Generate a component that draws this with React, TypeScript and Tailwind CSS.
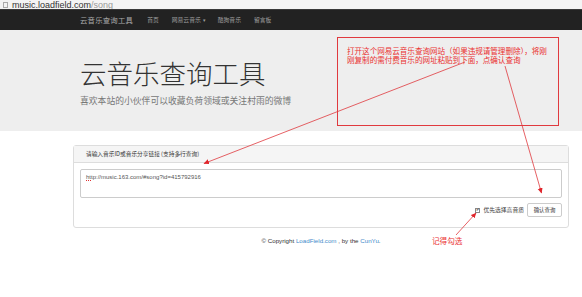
import React from "react"

const cjk = { fontFamily: '"Noto Sans CJK SC", sans-serif' }
const arial = { fontFamily: '"Liberation Sans", "Noto Sans CJK SC", sans-serif' }

export default function App() {
  return (
    <div className="relative w-[582px] h-[297px] overflow-hidden bg-white" style={arial}>
      {/* address bar */}
      <div className="h-[9px] overflow-hidden flex items-end bg-[#f4f4f4] pl-[3px]">
        <div className="w-[5px] h-[6px] border border-[#aaa] mr-[4px] mb-[1px]" />
        <span className="text-[9px] leading-[9px] text-[#333] -mb-[1px]">
          music.loadfield.com<span className="text-[#999]">/song</span>
        </span>
      </div>

      {/* navbar */}
      <div className="h-[21px] bg-[#222] border-t border-[#3a3a3a]">
        <div className="ml-[80px] flex items-center h-full text-[#9d9d9d]" style={cjk}>
          <span className="text-[7.4px] tracking-[0.2px] text-[#aaa]">云音乐查询工具</span>
          <span className="ml-[14px] text-[5.8px]">首页</span>
          <span className="ml-[13px] text-[5.8px]">网易云音乐</span>
          <span className="ml-[2px] text-[5px]">▾</span>
          <span className="ml-[12px] text-[5.8px]">酷狗音乐</span>
          <span className="ml-[13px] text-[5.8px]">留言板</span>
        </div>
      </div>

      {/* jumbotron */}
      <div className="h-[101px] bg-[#eee] pt-[28px]">
        <div className="ml-[80px]" style={cjk}>
          <div className="text-[26.5px] leading-[30px] font-light text-[#333]">云音乐查询工具</div>
          <div className="mt-[7px] text-[8.8px] leading-[11px] text-[#777]">喜欢本站的小伙伴可以收藏负荷领域或关注村雨的微博</div>
        </div>
      </div>

      {/* panel */}
      <div className="ml-[73px] w-[496px] mt-[14px] border border-[#ddd] rounded-[3px] bg-white">
        <div className="h-[17px] bg-[#f5f5f5] border-b border-[#ddd] flex items-center pl-[12px]">
          <span className="text-[5.7px] text-[#333]" style={cjk}>请输入音乐ID或音乐分享链接 (支持多行查询)</span>
        </div>
        <div className="pt-[6px] px-[6px] pb-[10px]">
          <div className="h-[29px] border border-[#ccc] rounded-[2px] pl-[5px] pt-[4px] text-[6px] leading-[7px] text-[#555]">
            <span className="underline decoration-dotted decoration-[#d33]">http</span>://music.163.com/#song?id=415792916
          </div>
          <div className="mt-[5px] flex items-center justify-end">
            <div className="w-[5px] h-[5px] border border-[#888] bg-white flex items-center justify-center text-[4px] leading-none text-[#333]">✔</div>
            <span className="ml-[3px] text-[5.8px] text-[#444]" style={cjk}>优先选择高音质</span>
            <div className="ml-[3px] w-[35px] h-[14px] border border-[#ccc] rounded-[2px] flex items-center justify-center text-[5.4px] text-[#333]" style={cjk}>确认查询</div>
          </div>
        </div>
      </div>

      {/* footer */}
      <div className="ml-[73px] w-[496px] mt-[9px] text-center text-[6.2px] leading-[8px] text-[#333]">
        © Copyright <span className="text-[#428bca]">LoadField.com</span> , by the <span className="text-[#428bca]">CunYu</span>.
      </div>

      {/* annotations */}
      <div className="absolute left-[337px] top-[37px] w-[222px] h-[89px] border border-[#e0393e] pl-[9px] pt-[8px]">
        <div className="text-[7.6px] leading-[9px] text-[#ea3030] tracking-[-0.05px]" style={cjk}>
          打开这个网易云音乐查询网站（如果违规请管理删除），将刚<br />刚复制的需付费音乐的网址粘贴到下面，点确认查询
        </div>
      </div>
      <div className="absolute left-[432px] top-[236px] text-[7.6px] leading-[10px] text-[#ea3030]" style={cjk}>记得勾选</div>

      <svg className="absolute inset-0 pointer-events-none" width="582" height="297" viewBox="0 0 582 297">
        <defs>
          <marker id="ah" markerWidth="6" markerHeight="6" refX="5" refY="3" orient="auto" markerUnits="userSpaceOnUse">
            <path d="M0,0.5 L5.5,3 L0,5.5 Z" fill="#e0252b" />
          </marker>
        </defs>
        <line x1="465" y1="62" x2="204" y2="163.5" stroke="#e0393e" strokeWidth="0.8" markerEnd="url(#ah)" />
        <line x1="505" y1="66" x2="541.5" y2="193" stroke="#e0393e" strokeWidth="0.8" markerEnd="url(#ah)" />
        <line x1="456" y1="235" x2="476" y2="213" stroke="#e0393e" strokeWidth="0.8" markerEnd="url(#ah)" />
      </svg>
    </div>
  )
}
